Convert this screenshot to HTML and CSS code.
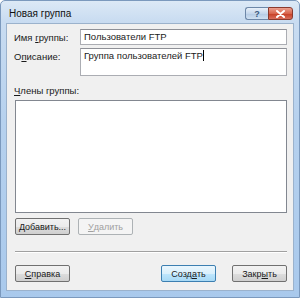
FILE: index.html
```html
<!DOCTYPE html>
<html>
<head>
<meta charset="utf-8">
<link rel="stylesheet" href="styles.css">
</head>
<body>
<div class="window">
  <div class="titlebar">
    <span class="title">Новая группа</span>
    <div class="caption-btns">
      <span class="cbtn help">?</span>
      <span class="cbtn close">
        <svg width="9" height="8" viewBox="0 0 9 8"><path d="M1 1 L8 7 M8 1 L1 7" stroke="#fff" stroke-width="2" stroke-linecap="round"/></svg>
      </span>
    </div>
  </div>
  <div class="client">
    <div class="fields">
      <label class="lbl">Имя <u>г</u>руппы:</label>
      <div class="input">Пользователи FTP</div>
      <label class="lbl">О<span class="ul">п</span>исание:</label>
      <div class="input area">Группа пользователей FTP<span class="caret"></span></div>
    </div>
    <div class="lbl members"><u>Ч</u>лены группы:</div>
    <div class="listbox"></div>
    <div class="row">
      <span class="btn"><u>Д</u>обавить...</span>
      <span class="btn disabled"><u>У</u>далить</span>
    </div>
    <div class="sep"></div>
    <div class="row bottom">
      <span class="btn"><u>С</u>правка</span>
      <span class="spacer"></span>
      <span class="btn default">Созд<u>а</u>ть</span>
      <span class="btn">Закр<u>ы</u>ть</span>
    </div>
  </div>
</div>
</body>
</html>
```
FILE: styles.css
```css
html, body {
  margin: 0;
  padding: 0;
  background: #ffffff;
}
body {
  width: 300px;
  height: 298px;
  overflow: hidden;
  font-family: "Liberation Sans", Arial, sans-serif;
  font-size: 9.5px;
  color: #1a1a1a;
}
u, .ul { text-decoration: underline; text-underline-offset: 1px; }
.window {
  box-sizing: border-box;
  width: 300px;
  height: 298px;
  display: flex;
  flex-direction: column;
  background: linear-gradient(to bottom, #dce9f6 0px, #c9dcf1 20px, #b6d1ee 120px, #a9c9ec 298px);
  border: 1px solid #7b99bd;
  border-radius: 5px 5px 0 0;
  padding: 0 5px 6px 5px;
}
.titlebar {
  height: 22px;
  display: flex;
  align-items: center;
  justify-content: space-between;
  flex: none;
}
.title {
  font-size: 10px;
  color: #111;
  padding-left: 3px;
  padding-top: 3px;
}
.caption-btns {
  display: flex;
  align-self: flex-start;
  margin-top: 6px;
  margin-right: 1px;
}
.cbtn {
  height: 13px;
  display: flex;
  align-items: center;
  justify-content: center;
  box-sizing: border-box;
  border: 1px solid #6d87a8;
  font-size: 9px;
  font-weight: bold;
}
.help {
  width: 23px;
  border-radius: 3px 0 0 3px;
  background: linear-gradient(to bottom, #e8f0f9, #c5d7ec 50%, #b4cae4 51%, #cfe0f2);
  color: #3a5a80;
  border-right: none;
}
.close {
  width: 25px;
  border-radius: 0 3px 3px 0;
  border-color: #8a3a2e;
  background: linear-gradient(to bottom, #eba08f, #d8644c 50%, #c63c22 51%, #d86e5c);
}
.client {
  flex: 1;
  background: #f0f0f0;
  border: 1px solid #9bb2cc;
  padding: 5px 6px 0 7px;
  display: flex;
  flex-direction: column;
}
.fields {
  display: grid;
  grid-template-columns: 66px 1fr;
  row-gap: 3px;
  align-items: start;
}
.lbl {
  padding-top: 3px;
  color: #1a1a1a;
}
.input {
  box-sizing: border-box;
  height: 16px;
  background: #fff;
  border: 1px solid #abadb3;
  border-top-color: #8e9097;
  padding: 1px 3px;
  line-height: 12px;
  white-space: nowrap;
}
.input.area {
  height: 28px;
}
.caret {
  display: inline-block;
  width: 1px;
  height: 11px;
  background: #000;
  vertical-align: -2px;
}
.members {
  margin-top: 9px;
  padding-top: 0;
  height: 12px;
}
.listbox {
  box-sizing: border-box;
  margin-top: 3px;
  height: 113px;
  background: #fff;
  border: 1px solid #828790;
  margin-left: 1px;
}
.row {
  display: flex;
  gap: 8px;
  margin-top: 5px;
  margin-left: 1px;
}
.btn {
  box-sizing: border-box;
  width: 55px;
  height: 17px;
  display: flex;
  align-items: center;
  justify-content: center;
  border: 1px solid #707070;
  border-radius: 2px;
  background: linear-gradient(to bottom, #f2f2f2, #ebebeb 50%, #dddddd 51%, #cfcfcf);
  color: #1a1a1a;
  font-size: 9px;
}
.btn.disabled {
  border-color: #adb2b5;
  background: #f4f4f4;
  color: #a0a0a0;
}
.btn.default {
  border-color: #3c7fb1;
  background: linear-gradient(to bottom, #eaf6fd, #d9f0fc 50%, #bee6fd 51%, #a7d9f5);
  width: 55px;
}
.sep {
  margin-top: 16px;
  height: 0;
  border-top: 1px solid #a0a0a0;
  border-bottom: 1px solid #ffffff;
  margin-left: 1px;
}
.bottom {
  margin-top: 12px;
  gap: 0;
}
.bottom .spacer { flex: 1; }
.bottom .default { margin-right: 16px; }
```
